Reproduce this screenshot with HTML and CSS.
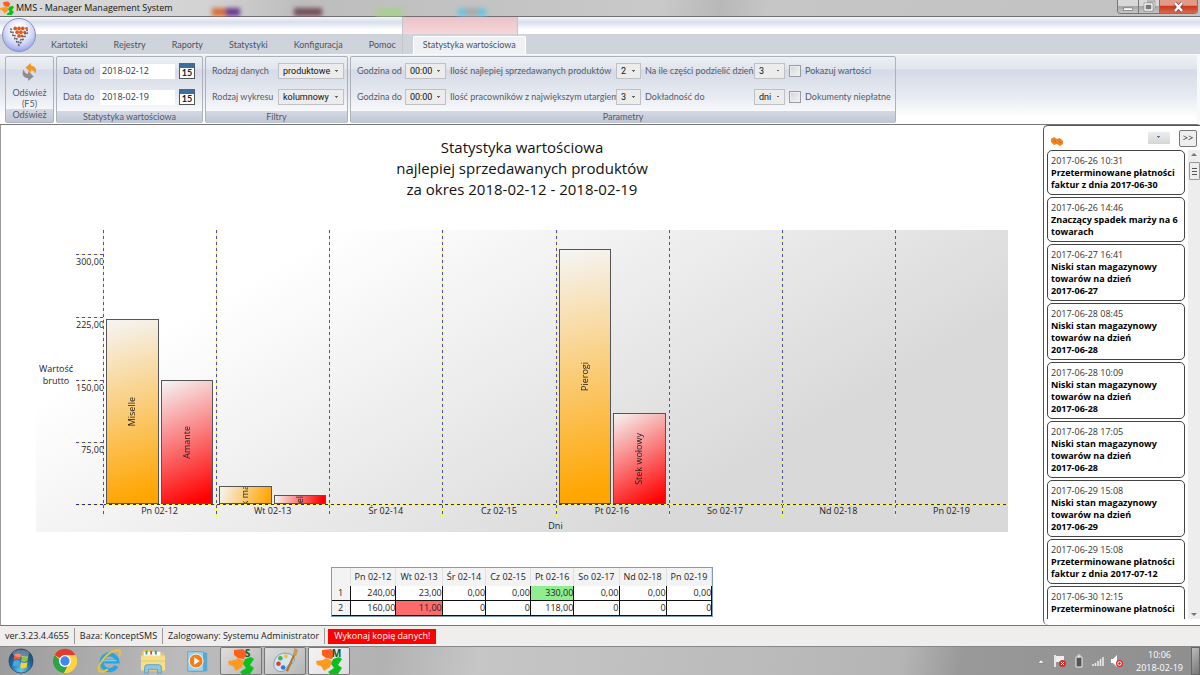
FILE: index.html
```
<!DOCTYPE html>
<html lang="pl">
<head>
    <meta charset="UTF-8">
    <meta name="viewport" content="width=device-width, initial-scale=1.0">
    <title>MMS - Manager Management System</title>
    <link rel="stylesheet" href="styles.css">
</head>
<body>
    <!-- shared logo shape -->
    <svg class="defs" aria-hidden="true">
        <symbol id="logo" viewBox="0 0 26 26">
            <path fill="#ff5f1c" d="M6 2l9-1 4 4-3 6-6-1-4-3z"/>
            <path fill="#ff9a1f" d="M0 13l7-1 3-2 6 3-2 6-6 4-3-5-4-1z"/>
            <path fill="#0cc01c" d="M17 11l6-2 3 2-4 6 4 3-4 6h-8l-2-2 6-4-3-4z"/>
        </symbol>
    </svg>

    <header class="titlebar">
        <svg class="app-icon"><use href="#logo"/></svg>
        <span class="app-title">MMS - Manager Management System</span>
        <div class="ghosts">
            <i class="ghost orange"></i><i class="ghost brown"></i><i class="ghost green"></i><i class="ghost blue"></i>
        </div>
        <div class="window-buttons">
            <button aria-label="Minimalizuj"><svg viewBox="0 0 22 13"><rect x="6" y="8" width="10" height="3" fill="#fff" stroke="#666" stroke-width=".7"/></svg></button>
            <button aria-label="Przywróć"><svg viewBox="0 0 20 13"><path d="M8 2h7v6" fill="none" stroke="#666" stroke-width="2.400"/><path d="M8 2h7v6" fill="none" stroke="#fff" stroke-width="1.200"/><path d="M6 4h7v6H6z" fill="#bbb" stroke="#666" stroke-width="2.400"/><path d="M6 4h7v6H6z" fill="#777" stroke="#fff" stroke-width="1.400"/></svg></button>
            <button class="close" aria-label="Zamknij"><svg viewBox="0 0 37 13"><path d="M15 3l7 8M22 3l-7 8" stroke="#744" stroke-width="4"/><path d="M15 3l7 8M22 3l-7 8" stroke="#fff" stroke-width="2.500"/></svg></button>
        </div>
    </header>

    <div class="ribbon-top">
        <div class="context-mark"></div>
        <button class="orb" aria-label="Menu">
            <svg viewBox="0 0 34 34">
                <g fill="#e4571b"><circle cx="13" cy="10" r="2"/><circle cx="17" cy="10" r="2"/><circle cx="21" cy="10" r="2"/><circle cx="25" cy="10" r="1.500"/><circle cx="15" cy="14" r="2"/><circle cx="19" cy="14" r="2"/><circle cx="23" cy="14" r="1.500"/><circle cx="17" cy="18" r="2"/><circle cx="20" cy="18" r="1.500"/></g>
                <g fill="none" stroke="#555" stroke-width="1.500" stroke-dasharray="2 2"><path d="M8 10l9 15 10-15M8 13l9 15 10-15"/></g>
            </svg>
        </button>
    </div>

    <nav class="tabs">
        <a href="#">Kartoteki</a>
        <a href="#">Rejestry</a>
        <a href="#">Raporty</a>
        <a href="#">Statystyki</a>
        <a href="#">Konfiguracja</a>
        <a href="#">Pomoc</a>
        <a href="#" class="active">Statystyka wartościowa</a>
    </nav>

    <div class="ribbon">
        <section class="group">
            <button class="refresh">
                <svg viewBox="0 0 20 22">
                    <path d="M5 6l6-5v3c5 0 7 4 5 9-1-3-2-4-5-4v3z" fill="#f7941d"/>
                    <path d="M14 16l-6 5v-3C3 18 0 14 3 8c1 4 2 5 5 5v-3z" fill="#8b8d90"/>
                </svg>
                <span>Odśwież<br>(F5)</span>
            </button>
            <footer>Odśwież</footer>
        </section>

        <section class="group">
            <div class="fields dates">
                <label for="date-from">Data od</label>
                <input type="text" id="date-from" value="2018-02-12">
                <button class="calendar">15</button>
                <label for="date-to">Data do</label>
                <input type="text" id="date-to" value="2018-02-19">
                <button class="calendar">15</button>
            </div>
            <footer>Statystyka wartościowa</footer>
        </section>

        <section class="group">
            <div class="fields filters">
                <label for="data-kind">Rodzaj danych</label>
                <select id="data-kind"><option>produktowe</option></select>
                <label for="chart-kind">Rodzaj wykresu</label>
                <select id="chart-kind"><option>kolumnowy</option></select>
            </div>
            <footer>Filtry</footer>
        </section>

        <section class="group">
            <div class="fields params">
                <label for="hour-from">Godzina od</label>
                <select id="hour-from"><option>00:00</option></select>
                <label for="top-products">Ilość najlepiej sprzedawanych produktów</label>
                <select id="top-products"><option>2</option></select>
                <label for="day-parts">Na ile części podzielić dzień</label>
                <select id="day-parts"><option>3</option></select>
                <input type="checkbox" id="show-values">
                <label for="show-values">Pokazuj wartości</label>
                <label for="hour-to">Godzina do</label>
                <select id="hour-to"><option>00:00</option></select>
                <label for="top-staff">Ilość pracowników z największym utargiem</label>
                <select id="top-staff"><option>3</option></select>
                <label for="precision">Dokładność do</label>
                <select id="precision"><option>dni</option></select>
                <input type="checkbox" id="unpaid">
                <label for="unpaid">Dokumenty niepłatne</label>
            </div>
            <footer>Parametry</footer>
        </section>
    </div>

    <main>
        <section class="report">
            <h1>Statystyka wartościowa<br>najlepiej sprzedawanych produktów<br>za okres 2018-02-12 - 2018-02-19</h1>

            <div class="chart">
                <div class="axis-title">Wartość brutto</div>
                <div class="scale">
                    <span>300,00</span>
                    <span>225,00</span>
                    <span>150,00</span>
                    <span>75,00</span>
                </div>
                <div class="plot">
                    <div class="day">
                        <div class="bar first" style="height: 185px; --angle: 164deg"><span>Miselle</span></div>
                        <div class="bar second" style="height: 124px; --angle: 157deg"><span>Amante</span></div>
                    </div>
                    <div class="day">
                        <div class="bar first" style="height: 18px; --angle: 108deg"><span>k ma</span></div>
                        <div class="bar second" style="height: 9px; --angle: 99deg"><span>el</span></div>
                    </div>
                    <div class="day"></div>
                    <div class="day"></div>
                    <div class="day">
                        <div class="bar first" style="height: 255px; --angle: 168deg"><span>Pierogi</span></div>
                        <div class="bar second" style="height: 91px; --angle: 150deg"><span>Stek wołowy</span></div>
                    </div>
                    <div class="day"></div>
                    <div class="day"></div>
                    <div class="day"></div>
                </div>
                <div class="day-names">
                    <span>Pn 02-12</span>
                    <span>Wt 02-13</span>
                    <span>Śr 02-14</span>
                    <span>Cz 02-15</span>
                    <span>Pt 02-16</span>
                    <span>So 02-17</span>
                    <span>Nd 02-18</span>
                    <span>Pn 02-19</span>
                </div>
                <div class="x-title">Dni</div>
            </div>

            <table class="values">
                <thead>
                    <tr><th></th><th>Pn 02-12</th><th>Wt 02-13</th><th>Śr 02-14</th><th>Cz 02-15</th><th>Pt 02-16</th><th>So 02-17</th><th>Nd 02-18</th><th>Pn 02-19</th></tr>
                </thead>
                <tbody>
                    <tr><th>1</th><td>240,00</td><td>23,00</td><td>0,00</td><td>0,00</td><td class="best">330,00</td><td>0,00</td><td>0,00</td><td>0,00</td></tr>
                    <tr><th>2</th><td>160,00</td><td class="worst">11,00</td><td>0</td><td>0</td><td>118,00</td><td>0</td><td>0</td><td>0</td></tr>
                </tbody>
            </table>
        </section>

        <aside class="alerts">
            <div class="alerts-head">
                <svg class="coins" viewBox="0 0 14 10"><path d="M1 3l3-2 3 2 3-1 3 3v3l-3 2-3-2-3 1-3-3z" fill="#ee8420"/><path d="M4 4l2 2M9 5l2 2" stroke="#c9600f"/></svg>
                <button class="drop" aria-label="Filtr"></button>
                <button class="collapse">&gt;&gt;</button>
            </div>
            <div class="alerts-body">
                <div class="alert-list">
                    <article><time>2017-06-26 10:31</time><b>Przeterminowane płatności faktur z dnia 2017-06-30</b></article>
                    <article><time>2017-06-26 14:46</time><b>Znaczący spadek marży na 6 towarach</b></article>
                    <article><time>2017-06-27 16:41</time><b>Niski stan magazynowy towarów na dzień<br>2017-06-27</b></article>
                    <article><time>2017-06-28 08:45</time><b>Niski stan magazynowy towarów na dzień<br>2017-06-28</b></article>
                    <article><time>2017-06-28 10:09</time><b>Niski stan magazynowy towarów na dzień<br>2017-06-28</b></article>
                    <article><time>2017-06-28 17:05</time><b>Niski stan magazynowy towarów na dzień<br>2017-06-28</b></article>
                    <article><time>2017-06-29 15:08</time><b>Niski stan magazynowy towarów na dzień<br>2017-06-29</b></article>
                    <article><time>2017-06-29 15:08</time><b>Przeterminowane płatności faktur z dnia 2017-07-12</b></article>
                    <article class="cut"><time>2017-06-30 12:15</time><b>Przeterminowane płatności</b></article>
                </div>
                <div class="scrollbar"><i class="up"></i><i class="thumb"></i><i class="down"></i></div>
            </div>
        </aside>
    </main>

    <div class="status">
        <span>ver.3.23.4.4655</span>
        <span>Baza: KonceptSMS</span>
        <span>Zalogowany: Systemu Administrator</span>
        <button class="backup">Wykonaj kopię danych!</button>
    </div>

    <div class="taskbar">
        <button aria-label="Start"><svg viewBox="0 0 28 28">
            <defs><radialGradient id="orb" cx=".5" cy=".9" r=".9"><stop offset="0" stop-color="#5fd0f5"/><stop offset=".5" stop-color="#1f6ba8"/><stop offset="1" stop-color="#1d3f66"/></radialGradient></defs>
            <circle cx="14" cy="14" r="13" fill="url(#orb)" stroke="#345" stroke-width=".8"/>
            <path d="M7 7q4-2 7 0l-1 6q-3-2-7 0z" fill="#f0582a"/><path d="M15 8q3 2 7 0l-1 6q-4 2-7 0z" fill="#8cc63f"/><path d="M6 14q3-2 7 0l-1 6q-3-2-7 0z" fill="#45a7e8"/><path d="M14 15q3 2 7 0l-1 6q-4 2-7 0z" fill="#ffcf2d"/>
            <ellipse cx="14" cy="6" rx="9" ry="4" fill="#fff" opacity=".3"/>
        </svg></button>
        <button aria-label="Chrome"><svg viewBox="0 0 28 28">
            <circle cx="14" cy="14" r="13" fill="#ffd23f"/>
            <path d="M14 14L2.700 7.500A13 13 0 0 1 25.300 7.500L14 8z" fill="#e33b2e"/><path d="M2.700 7.500A13 13 0 0 0 13 27l5-10-4 1z" fill="#2fa24c"/><path d="M14 8h11.300A13 13 0 0 1 13 27l6-10z" fill="#ffd23f"/>
            <circle cx="14" cy="14" r="6.500" fill="#fff"/><circle cx="14" cy="14" r="5" fill="#4285f4"/>
        </svg></button>
        <button aria-label="Internet Explorer"><svg viewBox="0 0 28 28">
            <path d="M22 19.500A8.500 8.500 0 1 1 23 14.500H9" fill="none" stroke="#2aa3e2" stroke-width="4.500"/>
            <path d="M7 13.500h15" stroke="#72d1f7" stroke-width="1.500"/>
            <path d="M4 25C-1 22 10 6 20 3c7-2 7 2 5 6M4 25c3 2 7-1 9-2" fill="none" stroke="#f5c22b" stroke-width="2"/>
        </svg></button>
        <button aria-label="Eksplorator"><svg viewBox="0 0 28 28">
            <path d="M2 5l2-3h9l1 3h12v20H2z" fill="#e8c35e"/><path d="M4 4h18v6H4z" fill="#fff"/><path d="M7 3v4M17 3v4" stroke="#30a060" stroke-width="2"/><path d="M12 3v4" stroke="#d84f30" stroke-width="2"/>
            <path d="M1 8h26v16H1z" fill="#f6df8c"/><path d="M1 14h26" stroke="#e3c262"/><path d="M5 27v-6q0-3 3-3h12q3 0 3 3v6h-4v-4H9v4z" fill="#8bc7e8" stroke="#5b9ec5"/>
        </svg></button>
        <button aria-label="Odtwarzacz"><svg viewBox="0 0 28 28">
            <path d="M8 3l17 2v20l-17 1z" fill="#59a8d0"/><path d="M4 4h17v21H4z" fill="#9bd3ed" stroke="#62a6c7"/><circle cx="13" cy="14" r="7.500" fill="#f57c16" stroke="#fff"/><path d="M11 10l6 4-6 4z" fill="#fff"/>
        </svg></button>
        <button class="open" aria-label="KonceptSMS"><svg viewBox="0 0 28 28"><use href="#logo" width="28" height="28"/><text x="18" y="10" class="letter">S</text></svg></button>
        <button class="open" aria-label="Paint"><svg viewBox="0 0 28 28">
            <path d="M2 19C1 10 9 4 17 6c8 1 9 9 4 11-5 1-4 3-6 6-3 4-12 3-13-4z" fill="#d4e5f2" stroke="#7c9ab1"/>
            <circle cx="7" cy="17" r="2.500" fill="#e23c2e"/><circle cx="9" cy="11" r="2.500" fill="#4caf50"/><circle cx="15" cy="9" r="2.200" fill="#f6c432"/><circle cx="12" cy="21" r="2.500" fill="#3778d4"/>
            <path d="M25 5l-9 20" stroke="#b87631" stroke-width="2.500"/><path d="M23 8l1-8 4 2-2 7z" fill="#c99854"/>
        </svg></button>
        <button class="open current" aria-label="MMS"><svg viewBox="0 0 28 28"><use href="#logo" width="28" height="28"/><text x="17" y="10" class="letter">M</text></svg></button>
        <div class="tray">
            <svg viewBox="0 0 12 14"><path d="M3 9l3-3 3 3z" fill="#fff" stroke="#777" stroke-width=".5"/></svg>
            <svg viewBox="0 0 12 14"><path d="M1 1v12" stroke="#fff" stroke-width="1.500"/><path d="M2 2h8v6H2z" fill="#eee"/><circle cx="8.500" cy="9.500" r="3.500" fill="#d92b2b"/><path d="M7 8l3 3m0-3l-3 3" stroke="#fff"/></svg>
            <svg viewBox="0 0 12 14"><path d="M3 3h6v10H3zM5 1h2v2H5z" fill="#555" stroke="#eee"/></svg>
            <svg viewBox="0 0 12 14"><path d="M1 12v-2M3.500 12V9M6 12V7M8.500 12V5M11 12V3" stroke="#eee" stroke-width="1.500"/></svg>
            <svg viewBox="0 0 12 14"><path d="M0 5h2l4-4v12l-4-4H0z" fill="#fff"/><circle cx="8.500" cy="9.500" r="3.500" fill="#d92b2b"/><circle cx="8.500" cy="9.500" r="1.800" fill="none" stroke="#fff"/></svg>
        </div>
        <div class="clock">10:06<br>2018-02-19</div>
        <button class="show-desktop" aria-label="Pokaż pulpit"></button>
    </div>
</body>
</html>
```
FILE: styles.css
```
* {
    box-sizing: border-box;
}

body {
    margin: 0;
    height: 100vh;
    display: flex;
    flex-direction: column;
    overflow: hidden;
    background: #fff;
    color: #222;
    font-family: "Open Sans", "Noto Sans", sans-serif;
    font-size: 9px;
    line-height: 12px;
}

button, input, select {
    margin: 0;
    padding: 0;
    border: 0;
    background: none;
    color: inherit;
    font: inherit;
}

a {
    color: inherit;
    text-decoration: none;
}

svg {
    display: block;
}

.defs {
    position: absolute;
    width: 0;
    height: 0;
}

/* window title */
.titlebar {
    display: flex;
    align-items: center;
    height: 17px;
    flex: none;
    border-bottom: 1px solid #707070;
    background: linear-gradient(100deg, #d9d9d9 0%, #d3d3d3 17%, #bdbdbd 25%, #c9c9c9 55%, #b8b8b8 60%, #c6c6c6 64%, #c2c2c2 100%);
}

.app-icon {
    width: 14px;
    height: 14px;
}

.app-title {
    margin-left: 2px;
    color: #111;
}

.ghosts {
    display: flex;
    flex: 1;
    gap: 54px;
    align-self: flex-end;
    margin-left: 39px;
}

.ghost {
    width: 28px;
    height: 8px;
    filter: blur(2px);
}

.orange { background: linear-gradient(90deg, #d8703c 50%, #6b3b95 50%); }
.brown { background: #75505a; }
.green { background: #a9cf92; }
.blue { background: linear-gradient(90deg, #6cc5e0 30%, #aaa 30%, #aaa 70%, #6cc5e0 70%); }

.window-buttons {
    display: flex;
    align-self: flex-start;
    margin-right: 2px;
    border: 1px solid #777;
    border-top: 0;
    border-radius: 0 0 4px 4px;
    overflow: hidden;
}

.window-buttons button {
    width: 21px;
    height: 13px;
    border-right: 1px solid #777;
    background: linear-gradient(#d8d8d8 45%, #a8a8a8 50%, #c4c4c4);
}

.window-buttons svg {
    width: 100%;
    height: 13px;
}

.window-buttons .close {
    width: 37px;
    border: 0;
    background: linear-gradient(#e09a86 40%, #c93a1e 50%, #d96a4c);
}

/* ribbon */
.ribbon-top {
    position: relative;
    height: 17px;
    flex: none;
    background: linear-gradient(#f4f7fb, #d8dfeb 30%, #fff 75%, #fff);
}

.context-mark {
    position: absolute;
    left: 402px;
    width: 116px;
    height: 37px;
    border: solid #c4c5cb;
    border-width: 0 1px;
    background: linear-gradient(#e9c3c9, #f6d6d8 45%, #cfd3dc 46%);
}

.orb {
    position: absolute;
    z-index: 2;
    left: 2px;
    top: 1px;
    width: 34px;
    height: 34px;
    border: 1px solid #8a93b8;
    border-radius: 50%;
    background: radial-gradient(circle at 50% 35%, #fff 20%, #cfd4f5 55%, #8e9af0 85%);
}

.tabs, .ribbon {
    font-family: Lato, "Open Sans", sans-serif;
}

.tabs {
    display: flex;
    align-items: flex-end;
    flex: none;
    height: 20px;
    padding-left: 38px;
    background: #cfd3dc;
    color: #4c535c;
}

.tabs a {
    position: relative;
    padding: 3px 13px;
}

.tabs .active {
    margin-left: 4px;
    padding: 2px 9px 3px;
    border: 1px solid #fff;
    border-bottom: 0;
    border-radius: 2px 2px 0 0;
    background: #eff1f5;
}

.ribbon {
    display: flex;
    gap: 2px;
    flex: none;
    height: 71px;
    padding: 1px 5px;
    border: solid #f8f9fb;
    border-width: 1px 3px 1px 0;
    border-bottom-color: #777;
    background: linear-gradient(#eef0f5, #e1e5ed 20%, #d5dae6 22%, #e8ebf2 60%, #fff 90%);
    color: #525c69;
}

.group {
    display: flex;
    flex-direction: column;
    height: 67px;
    border: 1px solid #adb1ba;
    border-radius: 2px;
}

.group footer {
    margin-top: auto;
    height: 13px;
    background: linear-gradient(#d5d9e4, #bfc5d3);
    text-align: center;
}

.refresh {
    width: 47px;
    padding-top: 5px;
    line-height: 11px;
}

.refresh svg {
    width: 18px;
    height: 20px;
    margin: 0 auto 5px;
}

.fields {
    display: grid;
    gap: 10px 4px;
    align-items: center;
    padding: 6px;
    grid-auto-rows: 16px;
    white-space: nowrap;
}

.dates {
    grid-template-columns: 33px 75px 16px;
    padding-right: 7px;
}

.filters {
    grid-template-columns: 62px 66px;
    padding-right: 3px;
}

.params {
    grid-template-columns: 44px 41px 162px 25px 105px 31px 12px 82px;
    padding-right: 8px;
}

.fields input[type="text"] {
    width: 100%;
    height: 15px;
    padding: 0 2px 2px;
    background: #fff;
    color: #333;
    font-family: "Open Sans", sans-serif;
}

.calendar {
    height: 16px;
    border: 1px solid #555;
    border-top: 5px solid #3c6f9e;
    background: #fff;
    color: #222;
    font-weight: bold;
    line-height: 10px;
}

select {
    appearance: none;
    width: 100%;
    height: 16px;
    padding-left: 4px;
    border: 1px solid #bfc0c3;
    background:
        linear-gradient(225deg, #666 50%, transparent 50%) right 6px top 6px / 2px 2px no-repeat,
        linear-gradient(135deg, #666 50%, transparent 50%) right 4px top 6px / 2px 2px no-repeat,
        #ececec;
    color: #111;
    font-family: Roboto, sans-serif;
}

input[type="checkbox"] {
    appearance: none;
    width: 12px;
    height: 12px;
    border: 1px solid #9a9ca0;
    background: linear-gradient(135deg, #d2d5d9, #f4f4f4);
    box-shadow: inset 0 0 0 1px #eee;
}

/* content */
main {
    display: flex;
    flex: 1;
    min-height: 0;
    border-bottom: 1px solid #777;
    border-left: 1px solid #999;
}

.report {
    flex: 1;
    display: flex;
    flex-direction: column;
    align-items: center;
    padding: 12px 35px 0;
}

h1 {
    margin: 0 0 30px;
    color: #111;
    font-size: 15px;
    font-weight: normal;
    line-height: 21px;
    text-align: center;
}

.chart {
    display: grid;
    grid-template-columns: 40px 27px 1fr;
    grid-template-rows: 275px 12px 15px;
    width: 100%;
    background: linear-gradient(150deg, #fff 20%, #d9d9d9 75%);
}

.axis-title {
    padding: 0 2px;
    align-self: center;
    margin-top: 14px;
    text-align: center;
}

.scale {
    display: grid;
    grid-template-rows: repeat(4, 1fr);
    padding-top: 24px;
    text-align: right;
    background: repeating-linear-gradient(90deg, #2020c0 0 3px, #ffff30 3px 6px) bottom / 100% 1px no-repeat;
}

.scale span {
    padding-top: 2px;
    background: repeating-linear-gradient(90deg, #4a4ae0 0 3px, #ffff30 3px 6px) top / 100% 1px no-repeat;
}

.plot, .day-names {
    display: grid;
    grid-template-columns: repeat(8, 1fr);
}

.plot {
    background: repeating-linear-gradient(90deg, #2020c0 0 3px, #ffff30 3px 6px) bottom / 100% 1px no-repeat;
}

.day {
    display: flex;
    align-items: flex-end;
    gap: 2px;
    padding: 0 3px 1px;
}

.day, .day-names span {
    background: repeating-linear-gradient(#4a4ae0 0 3px, #ffff30 3px 6px) left / 1px 100% no-repeat;
}

.bar {
    display: flex;
    align-items: center;
    justify-content: center;
    flex: 1;
    min-width: 0;
    border: 1px solid #555;
    overflow: hidden;
}

.bar span {
    flex: none;
    writing-mode: vertical-rl;
    transform: rotate(180deg);
    white-space: nowrap;
}

.first { background: linear-gradient(var(--angle), #f5f5f5, #ffa500 95%); }
.second { background: linear-gradient(var(--angle), #f5f5f5, #f00 95%); }

.day-names {
    grid-column: 3;
    text-align: center;
}

.x-title {
    grid-column: 3;
    text-align: center;
    line-height: 18px;
}

.values {
    margin-top: 35px;
    border: 1px solid #7f9db9;
    border-collapse: separate;
    border-spacing: 0;
    line-height: 14px;
}

.values th {
    padding: 0 4px;
    background: #f3f3f4;
    font-weight: normal;
}

.values thead th {
    height: 18px;
    border-right: 1px solid #e0e0e0;
}

.values td {
    padding: 0;
    text-align: right;
}

.values tbody th {
    width: 19px;
    text-align: center;
}

.values td, .values tbody th {
    height: 15px;
    border: solid #111;
    border-width: 0 1px 1px 0;
}

.values .best { background: #90ee90; }
.values .worst { background: #ff6b6b; }

/* alerts */
.alerts {
    display: flex;
    flex-direction: column;
    width: 157px;
    padding-left: 3px;
    border: solid #555;
    border-width: 1px 0 0 1px;
    border-radius: 5px 0 0 5px;
}

.alerts-head {
    display: flex;
    align-items: center;
    height: 24px;
    flex: none;
    padding: 0 3px;
}

.coins {
    width: 14px;
    height: 10px;
    margin-top: 6px;
}

.drop {
    width: 22px;
    height: 12px;
    margin-left: auto;
    background:
        linear-gradient(225deg, #4a7ab0 50%, transparent 50%) 9px 4px / 2px 2px no-repeat,
        linear-gradient(135deg, #4a7ab0 50%, transparent 50%) 11px 4px / 2px 2px no-repeat,
        linear-gradient(#eee, #d5d5d5);
}

.collapse {
    width: 18px;
    height: 17px;
    margin-left: 9px;
    border: 1px solid #777;
    border-radius: 2px;
    background: #eee;
}

.alerts-body {
    display: flex;
    flex: 1;
    min-height: 0;
    margin-bottom: 6px;
}

.alert-list {
    display: flex;
    flex-direction: column;
    gap: 2px;
    flex: 1;
    overflow: hidden;
}

article {
    flex: none;
    padding: 4px 3px 3px;
    border: 1px solid #444;
    border-radius: 5px;
    color: #000;
}

article time {
    display: block;
    color: #333;
}

article.cut {
    border-bottom: 0;
    border-radius: 5px 5px 0 0;
    padding-bottom: 8px;
}

.scrollbar {
    display: flex;
    flex-direction: column;
    align-items: center;
    width: 12px;
    margin-left: 3px;
    padding: 3px 0;
    background: #ededed;
}

.up, .down {
    border: 3px solid transparent;
}

.up {
    border-bottom-color: #777;
    border-top: 0;
}

.down {
    margin-top: auto;
    border-top-color: #777;
    border-bottom: 0;
}

.thumb {
    width: 11px;
    height: 18px;
    margin-top: 6px;
    border: 1px solid #999;
    border-radius: 1px;
    background: repeating-linear-gradient(#555 0 1px, #eee 1px 3px) center / 5px 7px no-repeat, #eee;
}

/* status bar */
.status {
    display: flex;
    align-items: center;
    height: 20px;
    flex: none;
    background: #f0eded;
    color: #222;
}

.status span {
    padding: 2px 5px;
    border-right: 1px solid #999;
}

.backup {
    height: 15px;
    margin-left: 3px;
    padding: 0 6px;
    background: #f00;
    color: #fff;
}

/* taskbar */
.taskbar {
    display: flex;
    align-items: center;
    height: 29px;
    flex: none;
    border-top: 1px solid #888;
    background: linear-gradient(100deg, #9b9b9b 0%, #bbb 15%, #b2b2b2 32%, #c6c6c6 40%, #b5b5b5 75%, #999 80%, #8e8e8e 100%);
}

.taskbar > button {
    width: 42px;
    height: 28px;
    margin-right: 2px;
}

.taskbar button svg {
    width: 26px;
    height: 26px;
    margin: 0 auto;
    overflow: visible;
}

.taskbar .open {
    border: 1px solid #777;
    border-radius: 2px;
    background: linear-gradient(135deg, #ddd, #b5b5b5);
}

.taskbar .current {
    background: linear-gradient(135deg, #f4f4f4, #ddd);
}

.letter {
    fill: #0b5c28;
    font-size: 11px;
    font-weight: bold;
}

.tray {
    display: flex;
    align-items: center;
    gap: 7px;
    margin-left: auto;
}

.tray svg {
    width: 12px;
    height: 14px;
}

.clock {
    margin: 0 8px 0 13px;
    color: #fff;
    line-height: 13px;
    text-align: center;
}

.taskbar .show-desktop {
    width: 9px;
    margin: 0;
    border: 1px solid #666;
    background: linear-gradient(135deg, #bbb, #777);
}
```
